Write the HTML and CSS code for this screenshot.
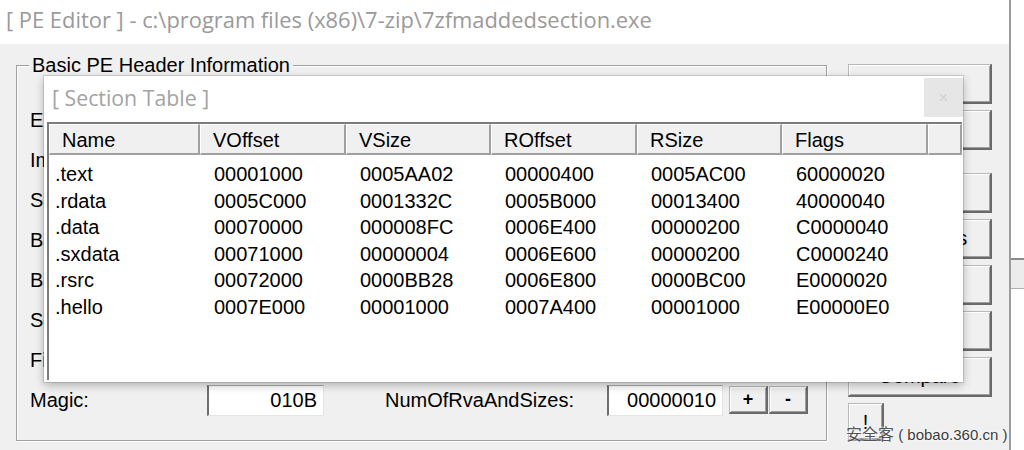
FILE: index.html
```html
<!DOCTYPE html>
<html>
<head>
<meta charset="utf-8">
<title>PE Editor</title>
<link rel="stylesheet" href="styles.css">
</head>
<body>
<div class="screen">
  <div class="window">
    <div class="titlebar">[ PE Editor ] - c:\program files (x86)\7-zip\7zfmaddedsection.exe</div>
    <div class="client">
      <div class="group">
        <div class="group-title">Basic PE Header Information</div>
        <div class="rows">
          <div class="row"><span class="lbl1">En</span></div>
          <div class="row"><span class="lbl1">Im</span></div>
          <div class="row"><span class="lbl1">Si</span></div>
          <div class="row"><span class="lbl1">Ba</span></div>
          <div class="row"><span class="lbl1">Ba</span></div>
          <div class="row"><span class="lbl1">Se</span></div>
          <div class="row"><span class="lbl1">Fi</span></div>
          <div class="row"><span class="lbl1">Magic:</span><span class="edit">010B</span><span class="lbl2">NumOfRvaAndSizes:</span><span class="edit edit2">00000010</span><span class="btn small plus">+</span><span class="btn small minus">-</span></div>
        </div>
      </div>
      <div class="buttons">
        <div class="btn side"></div>
        <div class="btn side"></div>
        <div class="btn side gap-lg"></div>
        <div class="btn side">Directories</div>
        <div class="btn side"></div>
        <div class="btn side"></div>
        <div class="btn side">Compare</div>
        <div class="btn side help">!</div>
      </div>
    </div>
  </div>
  <div class="behind"><div class="band"></div></div>

  <div class="section-win">
    <div class="st-title">
      <span class="st-caption">[ Section Table ]</span>
      <span class="st-close">×</span>
    </div>
    <div class="listview">
      <div class="lv-header">
        <div class="hd c0">Name</div>
        <div class="hd c1">VOffset</div>
        <div class="hd c2">VSize</div>
        <div class="hd c3">ROffset</div>
        <div class="hd c4">RSize</div>
        <div class="hd c5">Flags</div>
        <div class="hd filler"></div>
      </div>
      <div class="lv-body">
        <div class="lv-row"><span class="cell c0">.text</span><span class="cell c1">00001000</span><span class="cell c2">0005AA02</span><span class="cell c3">00000400</span><span class="cell c4">0005AC00</span><span class="cell c5">60000020</span></div>
        <div class="lv-row"><span class="cell c0">.rdata</span><span class="cell c1">0005C000</span><span class="cell c2">0001332C</span><span class="cell c3">0005B000</span><span class="cell c4">00013400</span><span class="cell c5">40000040</span></div>
        <div class="lv-row"><span class="cell c0">.data</span><span class="cell c1">00070000</span><span class="cell c2">000008FC</span><span class="cell c3">0006E400</span><span class="cell c4">00000200</span><span class="cell c5">C0000040</span></div>
        <div class="lv-row"><span class="cell c0">.sxdata</span><span class="cell c1">00071000</span><span class="cell c2">00000004</span><span class="cell c3">0006E600</span><span class="cell c4">00000200</span><span class="cell c5">C0000240</span></div>
        <div class="lv-row"><span class="cell c0">.rsrc</span><span class="cell c1">00072000</span><span class="cell c2">0000BB28</span><span class="cell c3">0006E800</span><span class="cell c4">0000BC00</span><span class="cell c5">E0000020</span></div>
        <div class="lv-row"><span class="cell c0">.hello</span><span class="cell c1">0007E000</span><span class="cell c2">00001000</span><span class="cell c3">0007A400</span><span class="cell c4">00001000</span><span class="cell c5">E00000E0</span></div>
      </div>
    </div>
  </div>

  <div class="watermark"><span class="wm-cjk">安全客</span> ( bobao.360.cn )</div>
</div>
</body>
</html>
```

FILE: styles.css
```css
* { box-sizing: border-box; }
html, body { margin: 0; padding: 0; }
body {
  background: #ffffff;
  font-family: "Liberation Sans", Arial, sans-serif;
  font-size: 20px;
  color: #000;
}
.screen {
  position: relative;
  display: flex;
  width: 1024px;
  height: 450px;
  overflow: hidden;
}
.window {
  width: 1011px;
  height: 450px;
  flex: none;
  background: #f0f0f0;
  border-right: 2px solid #9c9c9c;
  display: flex;
  flex-direction: column;
}
.titlebar {
  height: 44px;
  background: #ffffff;
  color: #9a9a9a;
  font-family: "Open Sans", "Noto Sans", sans-serif;
  font-size: 21.9px;
  line-height: 40px;
  padding-left: 6px;
  white-space: nowrap;
}
.client {
  display: flex;
  align-items: flex-start;
}
.group {
  margin: 21px 0 0 16px;
  width: 811px;
  height: 376px;
  border: 1px solid #a0a0a0;
  box-shadow: inset 1px 1px 0 #ffffff, 1px 1px 0 #ffffff;
}
.group-title {
  margin: -12px 0 0 12px;
  padding: 0 3px;
  width: fit-content;
  line-height: 23px;
  background: #f0f0f0;
}
.rows {
  margin-top: 23px;
  padding-left: 13px;
}
.row {
  display: flex;
  align-items: center;
  height: 40px;
}
.lbl1 { width: 177px; white-space: nowrap; }
.lbl2 { width: 222px; margin-left: 61px; }
.edit {
  width: 117px;
  height: 31px;
  background: #ffffff;
  border-left: 2px solid #6f6f6f;
  border-top: 1px solid #a8a8a8;
  border-right: 1px solid #e4e4e4;
  border-bottom: 1px solid #e4e4e4;
  text-align: right;
  padding-right: 6px;
  line-height: 28px;
}
.edit2 { width: 116px; }
.btn {
  background: #f0f0f0;
  border-top: 1px solid #b9b9b9;
  border-left: 1px solid #b9b9b9;
  border-right: 2px solid #6a6a6a;
  border-bottom: 2px solid #6a6a6a;
  box-shadow: inset 1px 1px 0 #ffffff, inset -1px -1px 0 #a0a0a0;
  text-align: center;
  white-space: nowrap;
}
.small {
  width: 39px;
  height: 28px;
  line-height: 24px;
  font-weight: bold;
  font-size: 18px;
}
.plus { margin-left: 6px; }
.minus { margin-left: 1px; }
.buttons {
  margin: 20px 0 0 21px;
  display: flex;
  flex-direction: column;
  gap: 6px;
}
.side {
  width: 144px;
  height: 40px;
  line-height: 37px;
}
.gap-lg { margin-top: 17px; }
.help {
  width: 36px;
  height: 38px;
  line-height: 36px;
}
.behind {
  flex: 1;
  background: #ffffff;
  padding-top: 258px;
}
.band {
  height: 31px;
  background: #ececec;
  border-top: 2px solid #8c8c8c;
  border-bottom: 1px solid #b0b0b0;
}

/* Section table window */
.section-win {
  position: absolute;
  left: 44px;
  top: 76px;
  width: 919px;
  height: 306px;
  background: #ffffff;
  box-shadow: 0 0 0 1px rgba(0,0,0,0.12), 0 3px 9px rgba(0,0,0,0.28);
  display: flex;
  flex-direction: column;
}
.st-title {
  height: 46px;
  flex: none;
  display: flex;
  align-items: flex-start;
  justify-content: space-between;
}
.st-caption {
  font-family: "Open Sans", "Noto Sans", sans-serif;
  font-size: 21.3px;
  color: #a3a3a3;
  padding-left: 8px;
  line-height: 44px;
}
.st-close {
  width: 39px;
  height: 39px;
  margin-top: 2px;
  background: #e6e6e6;
  color: #d2d2d2;
  font-size: 16px;
  line-height: 39px;
  text-align: center;
}
.listview {
  flex: 1;
  margin: 0 1px 2px 3px;
  border-top: 2px solid #7c7c7c;
  border-left: 2px solid #7c7c7c;
  background: #ffffff;
  overflow: hidden;
}
.lv-header {
  display: flex;
  height: 31px;
}
.hd {
  flex: none;
  height: 31px;
  background: #f0f0f0;
  border-top: 1px solid #ffffff;
  border-left: 1px solid #ffffff;
  border-right: 2px solid #a0a0a0;
  border-bottom: 2px solid #a0a0a0;
  padding-left: 12px;
  line-height: 30px;
  white-space: nowrap;
}
.hd.filler { flex: 1; }
.c0 { width: 151px; }
.c1 { width: 146px; }
.c2 { width: 145px; }
.c3 { width: 146px; }
.c4 { width: 145px; }
.c5 { width: 146px; }
.lv-body { padding-top: 5px; }
.lv-row {
  display: flex;
  height: 26.6px;
  line-height: 28px;
}
.cell {
  flex: none;
  padding-left: 14px;
  white-space: nowrap;
}
.cell.c0 { padding-left: 6px; }

.watermark {
  position: absolute;
  left: 846px;
  top: 423px;
  font-family: "Liberation Sans", "Noto Sans CJK SC", sans-serif;
  font-size: 15px;
  line-height: 20px;
  color: #3a3a3a;
  text-shadow: 0 0 2px #ffffff, 0 0 2px #ffffff;
  white-space: nowrap;
}
.wm-cjk {
  font-family: "Noto Sans CJK SC", sans-serif;
  font-size: 16px;
  color: #555555;
}
```
